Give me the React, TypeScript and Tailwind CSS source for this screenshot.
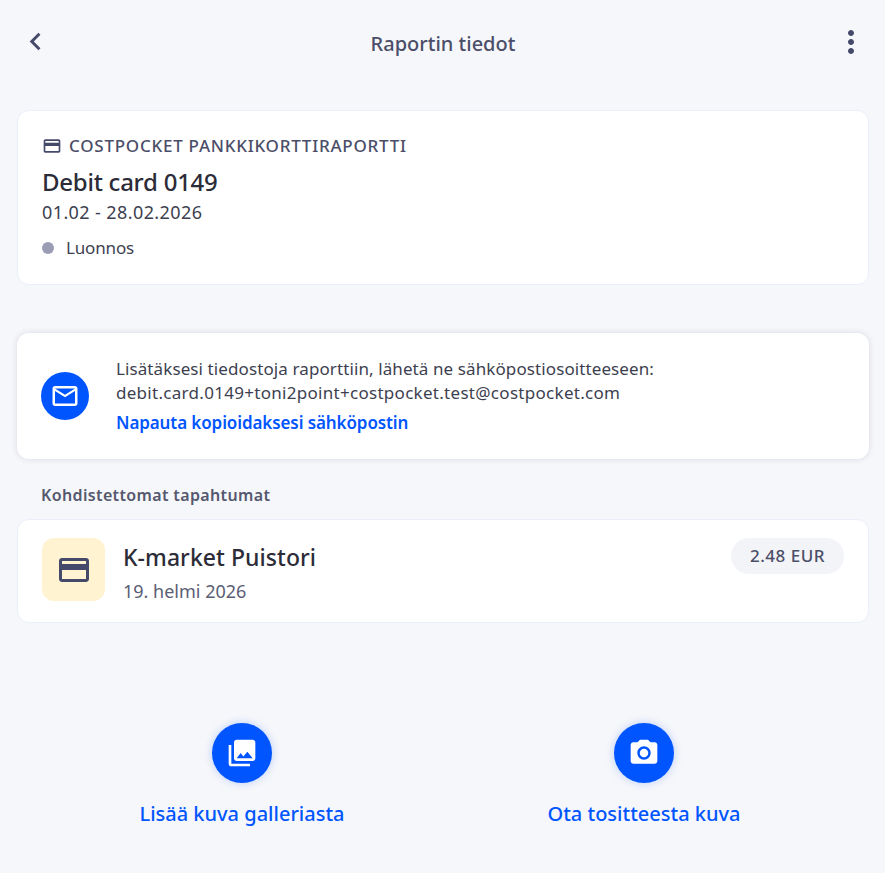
import type { ReactNode } from "react";
import { MdCameraAlt, MdChevronLeft, MdCreditCard, MdMailOutline, MdMoreVert, MdPhotoLibrary } from "react-icons/md";

function UploadAction({ label, children }: { label: string; children: ReactNode }) {
  return (
    <div className="flex flex-col items-center">
      <div className="flex h-[60px] w-[60px] items-center justify-center rounded-full bg-[#0055ff] text-white shadow-[0_0_8px_rgba(0,85,255,0.25)]">
        {children}
      </div>
      <div className="mt-[17px] text-[20px] leading-[28px] font-medium text-[#0055ff]">{label}</div>
    </div>
  );
}

export default function App() {
  return (
    <div className="h-[873px] w-[885px] overflow-hidden bg-[#f6f7fa] font-['Noto_Sans',sans-serif]">
      {/* Header */}
      <header className="flex h-[110px] items-start justify-between pl-[18px] pr-[22px] pt-[24px]">
        <MdChevronLeft className="h-[35px] w-[35px] text-[#45496a]" />
        <h1 className="mt-[5px] text-[20px] leading-[30px] font-medium text-[#4b4e68]">Raportin tiedot</h1>
        <MdMoreVert className="h-[36px] w-[36px] -mr-[6px] text-[#45496a]" />
      </header>

      {/* Report card */}
      <section className="ml-[17px] mr-[16px] h-[175px] rounded-[12px] border border-[#ebeffa] bg-white pl-[24px] pt-[24px]">
        <div className="flex items-center gap-[7px] text-[17px] leading-[22px] font-medium text-[#4b4e68] tracking-[0.75px]">
          <MdCreditCard className="h-[20px] w-[20px] text-[#45496a]" />
          COSTPOCKET PANKKIKORTTIRAPORTTI
        </div>
        <div className="mt-[10px] text-[24px] leading-[30px] font-medium text-[#2c2c38] tracking-[-0.25px]">Debit card 0149</div>
        <div className="mt-[2px] text-[18px] leading-[26px] text-[#3d3f50] tracking-[0.4px]">01.02 - 28.02.2026</div>
        <div className="mt-[11px] flex items-center gap-[12px] text-[17px] leading-[24px] text-[#3d3f50] tracking-[-0.15px]">
          <span className="h-[12px] w-[12px] rounded-full bg-[#9a9db3]" />
          Luonnos
        </div>
      </section>

      {/* Email hint */}
      <section className="ml-[17px] mr-[16px] mt-[48px] flex h-[126px] items-center rounded-[12px] bg-white pl-[24px] shadow-[0_0_6px_rgba(60,70,110,0.16)]">
        <div className="flex h-[48px] w-[48px] shrink-0 items-center justify-center rounded-full bg-[#0055ff] text-white">
          <MdMailOutline className="h-[30px] w-[30px]" />
        </div>
        <div className="ml-[27px] text-[17px] leading-[24px] text-[#3d3f50] tracking-[0.1px]">
          <div>Lisätäksesi tiedostoja raporttiin, lähetä ne sähköpostiosoitteeseen:</div>
          <div className="tracking-[0.29px]">debit.card.0149+toni2point+costpocket.test@costpocket.com</div>
          <div className="mt-[6px] font-semibold text-[#0055ff] tracking-[-0.1px]">Napauta kopioidaksesi sähköpostin</div>
        </div>
      </section>

      <h2 className="mt-[24px] pl-[41px] text-[16px] leading-[24px] font-semibold text-[#55586e] tracking-[0.36px]">Kohdistettomat tapahtumat</h2>

      {/* Transaction */}
      <section className="ml-[17px] mr-[16px] mt-[12px] flex h-[104px] items-start justify-between rounded-[12px] border border-[#ebeffa] bg-white pl-[24px] pr-[24px] pt-[18px]">
        <div className="flex">
          <div className="flex h-[63px] w-[63px] items-center justify-center rounded-[12px] bg-[#fff3d1]">
            <MdCreditCard className="h-[36px] w-[36px] text-[#45496a]" />
          </div>
          <div className="ml-[18px]">
            <div className="mt-[3px] text-[23px] leading-[32px] font-medium text-[#2c2c38] tracking-[0.06px]">K-market Puistori</div>
            <div className="mt-[5px] text-[18px] leading-[26px] text-[#5a5d74]">19. helmi 2026</div>
          </div>
        </div>
        <div className="flex h-[36px] items-center rounded-full bg-[#f3f4f7] px-[19px] text-[17px] font-medium text-[#4b4e68] tracking-[0.5px]">2.48 EUR</div>
      </section>

      {/* Actions */}
      <div className="mt-[100px] flex">
        <div className="flex w-[484px] justify-center">
          <UploadAction label="Lisää kuva galleriasta">
            <MdPhotoLibrary className="h-[32px] w-[32px]" />
          </UploadAction>
        </div>
        <div className="flex w-[320px] justify-center">
          <UploadAction label="Ota tositteesta kuva">
            <MdCameraAlt className="h-[32px] w-[32px]" />
          </UploadAction>
        </div>
      </div>
    </div>
  );
}
